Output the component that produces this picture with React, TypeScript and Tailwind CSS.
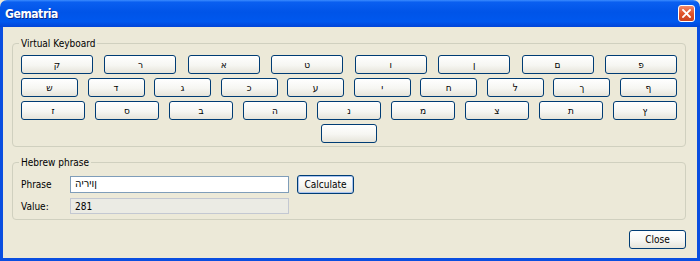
import React from 'react';

const row1 = ['ק', 'ר', 'א', 'ט', 'ו', 'ן', 'ם', 'פ'];
const row2 = ['ש', 'ד', 'ג', 'כ', 'ע', 'י', 'ח', 'ל', 'ך', 'ף'];
const row3 = ['ז', 'ס', 'ב', 'ה', 'נ', 'מ', 'צ', 'ת', 'ץ'];
// shown in typed order, left to right, as the original field draws it
const phrase = ['ה', 'י', 'ר', 'י', 'ו', 'ן'];

const btn =
  'h-[19px] rounded-[3px] border border-[#003c74] bg-[linear-gradient(to_bottom,#ffffff_0%,#f6f6f2_55%,#e6e4da_100%)] text-[10px] leading-none text-black flex items-center justify-center';

const Key: React.FC<{ ch: string; w: string }> = ({ ch, w }) => (
  <button className={`${btn} ${w} text-[#222]`}>{ch}</button>
);

const GroupBox: React.FC<{ title: string; className?: string; children: React.ReactNode }> = ({
  title,
  className,
  children,
}) => (
  <div className={`relative rounded-[4px] border border-[#d0d0bf] ${className ?? ''}`}>
    <span className="absolute -top-[7px] left-[6px] bg-[#ece9d8] px-[2px] text-[10px] leading-[13px] text-black">
      {title}
    </span>
    {children}
  </div>
);

export default function App() {
  return (
    <div className="w-[700px] h-[261px] bg-[#ece9d8] font-['DejaVu_Sans_Condensed','Liberation_Sans',sans-serif] flex flex-col overflow-hidden">
      {/* title bar */}
      <div className="h-[27px] shrink-0 rounded-t-[7px] bg-[linear-gradient(to_bottom,#3b8cff_0%,#0a5ff0_8%,#0054e8_45%,#0058ee_80%,#0245d8_100%)] flex items-center justify-between pl-[5px] pr-[5px]">
        <span className="text-[12px] font-bold text-white tracking-[-0.4px] [text-shadow:1px_1px_0_#0a2a8a]">
          Gematria
        </span>
        <div className="w-[17px] h-[17px] rounded-[3px] border border-white bg-[linear-gradient(to_bottom,#f08a6c,#e0532a_50%,#c94220)] flex items-center justify-center">
          <svg width="9" height="9" viewBox="0 0 9 9">
            <path d="M1 1 L8 8 M8 1 L1 8" stroke="#fff" strokeWidth="1.8" strokeLinecap="square" />
          </svg>
        </div>
      </div>

      {/* body */}
      <div className="flex-1 flex flex-col border-x-[3px] border-b-[3px] border-[#0a4ee0] pl-[9px] pr-[11px]">
        <GroupBox title="Virtual Keyboard" className="mt-[16px] h-[104px] px-[8px] pt-[11px]">
          <div className="flex flex-col gap-[4px]">
            <div className="flex justify-between">
              {row1.map((c) => (
                <Key key={c} ch={c} w="w-[72px]" />
              ))}
            </div>
            <div className="flex justify-between">
              {row2.map((c) => (
                <Key key={c} ch={c} w="w-[57px]" />
              ))}
            </div>
            <div className="flex justify-between">
              {row3.map((c) => (
                <Key key={c} ch={c} w="w-[64px]" />
              ))}
            </div>
            <div className="flex justify-center">
              <Key ch="" w="w-[56px]" />
            </div>
          </div>
        </GroupBox>

        <GroupBox title="Hebrew phrase" className="mt-[15px] h-[58px] pl-[8px] pt-[12px]">
          <div className="flex items-center">
            <span className="w-[49px] text-[10px] text-black">Phrase</span>
            <div className="w-[219px] h-[17px] border border-[#7f9db9] bg-white flex items-center pl-[4px] text-[11px] text-black">
              {phrase.map((c, i) => (
                <span key={i}>{c}</span>
              ))}
            </div>
            <button className={`${btn} w-[57px] ml-[8px] shadow-[inset_0_0_0_1px_#a9c4f0]`}>
              Calculate
            </button>
          </div>
          <div className="flex items-center mt-[4px]">
            <span className="w-[49px] text-[10px] text-black">Value:</span>
            <div className="w-[219px] h-[16px] border border-[#c3c8d2] bg-[#ebebe4] flex items-center pl-[4px] text-[10px] text-black">
              281
            </div>
          </div>
        </GroupBox>

        <div className="flex justify-end mt-[10px]">
          <button className={`${btn} w-[57px]`}>Close</button>
        </div>
      </div>
    </div>
  );
}
